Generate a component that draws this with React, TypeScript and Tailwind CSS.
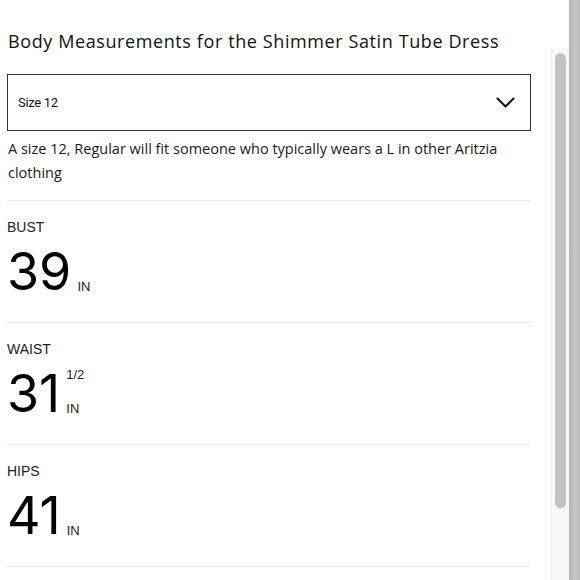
const rows = [
  { label: 'BUST', value: '39', fraction: '' },
  { label: 'WAIST', value: '31', fraction: '1/2' },
  { label: 'HIPS', value: '41', fraction: '' },
];

function Chevron() {
  return (
    <svg width="19" height="11" viewBox="0 0 19 11" fill="none">
      <path d="M1.5 1.5 L9.5 9.5 L17.5 1.5" stroke="#111" strokeWidth="2" strokeLinecap="round" strokeLinejoin="round" />
    </svg>
  );
}

function Measurement({ label, value, fraction }: { label: string; value: string; fraction: string }) {
  return (
    <div className="border-t border-[#ececec] pt-[16px] pb-[21px]">
      <div className="text-[14px] leading-5 text-[#222] font-['Liberation_Sans',sans-serif]">{label}</div>
      <div className="mt-[6px] flex items-end">
        <span className="text-[52px] leading-[58px] text-black font-['Inter',sans-serif]">{value}</span>
        <div className="ml-[6px] mb-[8px] flex flex-col font-['Liberation_Sans',sans-serif] text-[#222]">
          {fraction && <span className="text-[13px] leading-none mb-[21px]">{fraction}</span>}
          <span className="text-[13px] leading-none">IN</span>
        </div>
      </div>
    </div>
  );
}

export default function App() {
  return (
    <div className="w-[580px] h-[580px] bg-white flex overflow-hidden">
      <div className="w-[551px] shrink-0 pl-[7px] pr-[20px] pt-[27px]">
        <h1 className="pl-[1px] text-[18px] tracking-[0.6px] leading-[28px] text-[#111] font-['Open_Sans',sans-serif]">
          Body Measurements for the Shimmer Satin Tube Dress
        </h1>
        <div className="mt-[19px] h-[57px] border border-[#333] flex items-center justify-between pl-[10px] pr-[15px]">
          <span className="text-[13px] tracking-[-0.3px] text-[#111] font-['Roboto',sans-serif]">Size 12</span>
          <Chevron />
        </div>
        <p className="mt-[6px] mb-[15px] pl-[1px] text-[14.5px] leading-[24px] text-[#1a1a1a] font-['Open_Sans',sans-serif]">
          A size 12, Regular will fit someone who typically wears a L in other Aritzia clothing
        </p>
        {rows.map((r) => (
          <Measurement key={r.label} {...r} />
        ))}
        <div className="border-t border-[#ececec]" />
      </div>
      <div className="w-[18px] shrink-0 pt-[48px] flex flex-col">
        <div className="flex-1 bg-[#f8f8f8] border-l border-[#efefef] pt-[5px]">
          <div className="mx-[3px] h-[455px] rounded-full bg-[#c2c2c2]" />
        </div>
      </div>
      <div className="flex-1 bg-gradient-to-r from-[#b4b4b4] via-[#c6c6c6] to-[#bcbcbc]" />
    </div>
  );
}
